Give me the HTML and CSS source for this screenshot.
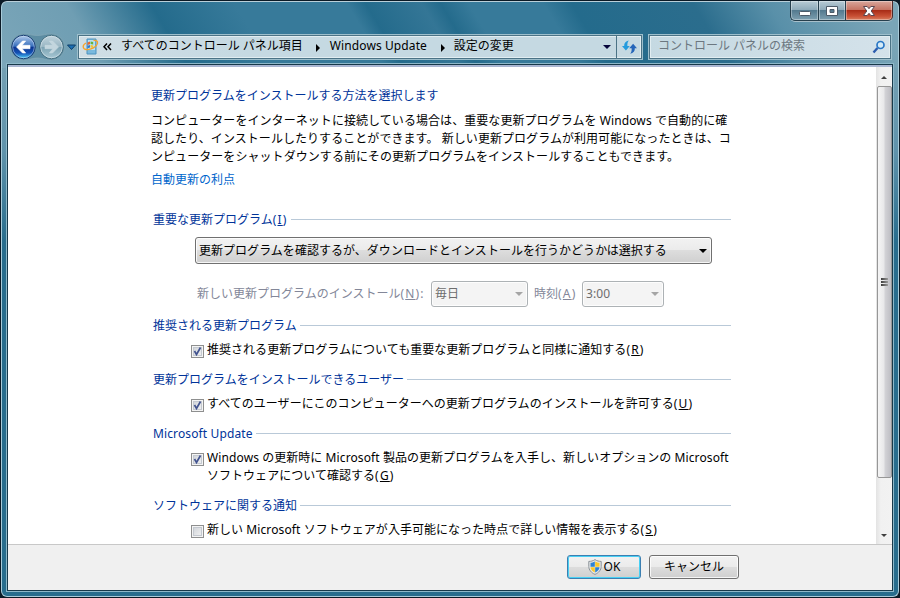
FILE: index.html
```html
<!DOCTYPE html>
<html lang="ja">
<head>
    <meta charset="UTF-8">
    <meta name="viewport" content="width=device-width, initial-scale=1.0">
    <title>設定の変更</title>
    <link rel="stylesheet" href="styles.css">
</head>
<body>
    <div class="window">
        <div class="caption">
            <span class="cap min"><svg width="14" height="8" viewBox="0 0 14 8"><rect x="1.500" y="2.500" width="11" height="4" rx="1" fill="#fff" stroke="#4c5b69"/></svg></span>
            <span class="cap max"><svg width="12" height="10" viewBox="0 0 12 10"><path d="M.5 .5h11v9H.5zM4 3.500h4v3H4z" fill="#fff" fill-rule="evenodd" stroke="#4c5b69"/></svg></span>
            <span class="cap close"><svg width="14" height="12" viewBox="0 0 14 12"><path d="M1.500 1.500h3.700L7 3.700l1.800-2.200h3.700L9.200 6l3.300 4.500H8.800L7 8.300l-1.800 2.200H1.500L4.800 6z" fill="#fff" stroke="#5a4650"/></svg></span>
        </div>
        <div class="navbar">
            <svg class="nav" width="72" height="28" viewBox="0 0 72 28">
                <defs>
                    <linearGradient id="back" x1="0" y1="0" x2="0" y2="1">
                        <stop offset="0" stop-color="#b3cdec"/>
                        <stop offset=".47" stop-color="#386fbd"/>
                        <stop offset=".5" stop-color="#0b3590"/>
                        <stop offset=".75" stop-color="#1450b4"/>
                        <stop offset="1" stop-color="#4fd2fa"/>
                    </linearGradient>
                    <linearGradient id="fwd" x1="0" y1="0" x2="0" y2="1">
                        <stop offset="0" stop-color="#c3d5de"/>
                        <stop offset=".5" stop-color="#98b6c3"/>
                        <stop offset=".52" stop-color="#7da3b3"/>
                        <stop offset="1" stop-color="#a9c9d5"/>
                    </linearGradient>
                </defs>
                <path d="M14.500 .8C20 .8 23 2.500 28.500 2.500S37 .8 42.500 .8a13.200 13.200 0 0 1 0 26.400C37 27.200 34 25 28.500 25S20 27.200 14.500 27.200a13.200 13.200 0 0 1 0-26.400z" fill="#4d7f96" fill-opacity=".6" stroke="#86a9b8" stroke-opacity=".7"/>
                <circle cx="14.500" cy="14" r="11.700" fill="url(#back)" stroke="#173a70"/>
                <circle cx="14.500" cy="14" r="10.800" fill="none" stroke="#d4e6f8" stroke-opacity=".6" stroke-width=".8"/>
                <path d="M7.500 14l6-6h3.200l-3.500 4.300H21v3.400h-7.800l3.500 4.300h-3.200z" fill="#fff" stroke="#fff" stroke-width=".6"/>
                <circle cx="42.500" cy="14" r="11.700" fill="url(#fwd)" stroke="#426b7c"/>
                <circle cx="42.500" cy="14" r="10.800" fill="none" stroke="#d9e8ee" stroke-opacity=".8" stroke-width=".8"/>
                <path d="M49.500 14l-6-6h-3.200l3.500 4.300H36v3.400h7.800l-3.500 4.300h3.200z" fill="#c3d6de" stroke="#c8dae1" stroke-width=".6"/>
                <path d="M58.500 12h8l-4 4.500z" fill="#1b6fb4" stroke="#0e3f68"/>
            </svg>
            <div class="address">
                <svg class="place" width="17" height="17" viewBox="0 0 17 17">
                    <path d="M5 1h9v15H5z" fill="#79b9de" stroke="#4c93c0"/>
                    <path d="M6 2h7v10H6z" fill="#b8e0f4"/>
                    <path d="M5.500 4.500l2.500-1v2.700l-2.500 .8z" fill="#e8662e"/>
                    <path d="M8.600 3.500l2.600 .6v2.400l-2.600-.4z" fill="#66b53b"/>
                    <path d="M5.500 7.700l2.500-.7v2.500l-2.500 .8z" fill="#2e78cf"/>
                    <path d="M8.600 7l2.600 .5v2.300l-2.600-.3z" fill="#f7c52c"/>
                    <path d="M4 5C0 7 .5 11 4 11.500c5 .5 11-3 11.500-6C16 3 14 2 11.500 2.500" fill="none" stroke="#f5a32b" stroke-width="1.300"/>
                </svg>
                <svg class="chevrons" width="9" height="8" viewBox="0 0 9 8"><path d="M4 .5L1 3.800l3 3.200M8 .5L5 3.800 8 7" fill="none" stroke="#000" stroke-width="1.500"/></svg>
                <span class="crumb">すべてのコントロール パネル項目</span>
                <i class="sep"></i>
                <span class="crumb en-wide">Windows Update</span>
                <i class="sep"></i>
                <span class="crumb">設定の変更</span>
                <i class="arrow"></i>
                <span class="refresh">
                    <svg width="15" height="14" viewBox="0 0 15 14">
                        <path d="M6.800 .5C3.500 1 2 3.200 2.200 6H0L3.900 10.400 7.800 6H5.400C5.200 3.800 5.500 2 6.800 .5z" fill="#249bdd"/>
                        <path d="M8.200 13.700c3.300-.5 4.800-2.700 4.600-5.500H15L11.100 3.800 7.200 8.200h2.400c.2 2.200-.1 4-1.400 5.500z" fill="#2565b9"/>
                    </svg>
                </span>
            </div>
            <div class="search">
                <span>コントロール パネルの検索</span>
                <svg width="14" height="14" viewBox="0 0 14 14"><path d="M1.500 12.500l4-4.500" stroke="#2c5cae" stroke-width="2.400"/><circle cx="8.500" cy="5" r="3.500" fill="#d5ebf8" stroke="#2a77c5" stroke-width="1.700"/></svg>
            </div>
        </div>
        <div class="client">
            <div class="page">
                <div class="content">
                    <h1>更新プログラムをインストールする方法を選択します</h1>
                    <p>コンピューターをインターネットに接続している場合は、重要な更新プログラムを <span class="en">Windows</span> で自動的に確<br>認したり、インストールしたりすることができます。 新しい更新プログラムが利用可能になったときは、コ<br>ンピューターをシャットダウンする前にその更新プログラムをインストールすることもできます。</p>
                    <a class="link">自動更新の利点</a>

                    <h2 class="first">重要な更新プログラム<span class="key">(<u>I</u>)</span></h2>
                    <div class="combo main"><span>更新プログラムを確認するが、ダウンロードとインストールを行うかどうかは選択する</span><i class="arrow"></i></div>
                    <div class="schedule">
                        <span class="day-label">新しい更新プログラムのインストール<span class="key">(<u>N</u>):</span></span>
                        <div class="combo off day"><span>毎日</span><i class="arrow"></i></div>
                        <span class="time-label">時刻<span class="key">(<u>A</u>)</span></span>
                        <div class="combo off time"><span class="en">3:00</span><i class="arrow"></i></div>
                    </div>

                    <h2>推奨される更新プログラム</h2>
                    <div class="option">
                        <span class="check"><svg width="9" height="9" viewBox="0 0 9 9"><path d="M1.500 4l2 3.500L7.500 .5" fill="none" stroke="#42538f" stroke-width="1.700"/></svg></span>
                        <span class="text">推奨される更新プログラムについても重要な更新プログラムと同様に通知する<span class="key">(<u>R</u>)</span></span>
                    </div>

                    <h2>更新プログラムをインストールできるユーザー</h2>
                    <div class="option">
                        <span class="check"><svg width="9" height="9" viewBox="0 0 9 9"><path d="M1.500 4l2 3.500L7.500 .5" fill="none" stroke="#42538f" stroke-width="1.700"/></svg></span>
                        <span class="text">すべてのユーザーにこのコンピューターへの更新プログラムのインストールを許可する<span class="key">(<u>U</u>)</span></span>
                    </div>

                    <h2><span class="en">Microsoft Update</span></h2>
                    <div class="option">
                        <span class="check"><svg width="9" height="9" viewBox="0 0 9 9"><path d="M1.500 4l2 3.500L7.500 .5" fill="none" stroke="#42538f" stroke-width="1.700"/></svg></span>
                        <span class="text"><span class="en">Windows</span> の更新時に <span class="en">Microsoft</span> 製品の更新プログラムを入手し、新しいオプションの <span class="en">Microsoft</span><br>ソフトウェアについて確認する<span class="key">(<u>G</u>)</span></span>
                    </div>

                    <h2>ソフトウェアに関する通知</h2>
                    <div class="option">
                        <span class="check"></span>
                        <span class="text">新しい <span class="en">Microsoft</span> ソフトウェアが入手可能になった時点で詳しい情報を表示する<span class="key">(<u>S</u>)</span></span>
                    </div>
                </div>
                <div class="scrollbar">
                    <i class="up"></i>
                    <div class="thumb"><i></i><i></i><i></i></div>
                    <i class="down"></i>
                </div>
            </div>
            <div class="footer">
                <div class="button default">
                    <svg width="14" height="16" viewBox="0 0 14 16">
                        <path d="M7 .6C5 2 3 2.400 .8 2.400v5C.8 11 3.500 14 7 15.400c3.500-1.400 6.200-4.400 6.200-8v-5C11 2.400 9 2 7 .6z" fill="#e6e8ea" stroke="#8b9298"/>
                        <path d="M6.800 2.500C5.300 3.400 4 3.700 2.500 3.800v4h4.300z" fill="#2c82d4"/>
                        <path d="M7.200 2.500c1.500.9 2.800 1.200 4.300 1.300v4H7.200z" fill="#fbc92b"/>
                        <path d="M2.500 8.200h4.300v5.200C4.300 12.300 2.700 10.500 2.500 8.200z" fill="#fbc92b"/>
                        <path d="M11.500 8.200H7.200v5.200c2.500-1.100 4.100-2.900 4.300-5.200z" fill="#2c82d4"/>
                    </svg>
                    <span>OK</span>
                </div>
                <div class="button">キャンセル</div>
            </div>
        </div>
    </div>
</body>
</html>
```

FILE: styles.css
```css
* {
    box-sizing: border-box;
}
body {
    margin: 0;
    padding-top: 1px;
    background: #0b1a26;
    font-family: "Noto Sans", "Noto Sans CJK JP", sans-serif;
    font-size: 12px;
    line-height: 18px;
    color: #000;
    overflow: hidden;
    white-space: nowrap;
}
h1, h2, p {
    margin: 0;
    font-size: 12px;
    font-weight: normal;
}
svg {
    display: block;
    flex: none;
}
u {
    text-underline-offset: 1px;
}
.en {
    letter-spacing: 0.12px;
}
.key {
    letter-spacing: 1.2px;
}
.window {
    width: 898px;
    height: 596px;
    margin-left: 1px;
    padding: 0 5px 4px 4px;
    border: 1px solid #a9cbd9;
    border-top-color: #b9cfd9;
    border-radius: 6px;
    background:
        linear-gradient(59deg, #7ba6b9 0, #6f9eb3 11%, #246b8c 20%, #377a9a 29%, #377a9a 41%, #246b8c 43%, #347696 49%, #246b8c 51%, #377a9a 54%, #377a9a 62%, #246b8c 65%, #2b6d8d 78%, #5990a9 86%, #7aa5b7 97%) 0 0 / 100% 66px no-repeat,
        linear-gradient(#74a0b3 66px, #5f93ab 150px, #286d8d 240px, #286d8d);
}

/* caption buttons */
.caption {
    display: flex;
    justify-content: flex-end;
    height: 30px;
    margin-top: -1px;
    padding-right: 7px;
    margin-right: -7px;
}
.cap {
    display: flex;
    align-items: center;
    justify-content: center;
    width: 28px;
    height: 20px;
    border: 1px solid #263f4d;
    border-top: 0;
    border-right: 0;
    background: linear-gradient(#b7cbd5, #8fabba 45%, #547a8f 50%, #7d9fb0);
    box-shadow: inset 0 0 0 1px rgba(255, 255, 255, 0.35), 0 1px 0 #a8c0cb;
}
.min {
    border-bottom-left-radius: 5px;
}
.min svg {
    margin-top: 5px;
}
.max {
    width: 27px;
}
.close {
    width: 48px;
    border-right: 1px solid #4d2a2a;
    border-bottom-right-radius: 5px;
    background: linear-gradient(#d9a79c, #c67565 45%, #a92d18 50%, #c95136 80%, #d77f61);
}

/* navigation row */
.navbar {
    display: flex;
    align-items: center;
    height: 32px;
    padding: 0 1px 0 3px;
}
.nav {
    margin-right: -4px;
}
.address, .search {
    display: flex;
    align-items: center;
    height: 26px;
    margin-top: -1px;
    border: 1px solid #9dbfcc;
    box-shadow: inset 0 0 0 1px #4b7386, inset 0 0 0 2px #e1edf1;
    background: linear-gradient(90deg, #d0dee5, #c5d9e2 30%, #c5d9e2);
}
.address {
    flex: none;
    width: 566px;
    padding: 0 0 0 4px;
    margin-right: 5px;
}
.place {
    margin-right: 4px;
}
.chevrons {
    margin-right: 9px;
}
.crumb {
    margin-top: -2px;
}
.sep {
    margin: 2px 9px 0 13px;
    border: 4px solid transparent;
    border-left-color: #000;
    border-right-width: 0;
}
.en-wide {
    width: 98px;
    margin-left: 1px;
    letter-spacing: 0.1px;
}
.arrow {
    flex: none;
    margin-left: auto;
    border: 4px solid transparent;
    border-top-color: currentColor;
    border-bottom-width: 0;
}
.address .arrow {
    color: #06063c;
    margin-right: 5px;
    margin-top: 1px;
}
.refresh {
    display: flex;
    align-items: center;
    justify-content: center;
    width: 26px;
    height: 22px;
    border-left: 1px solid #4b7386;
}
.search {
    flex: 1;
    justify-content: space-between;
    padding: 0 5px 0 9px;
    background: linear-gradient(90deg, #c5d9e2, #d4e2ea);
    color: #6c7780;
}
.search span {
    margin-top: -1px;
}

/* client area */
.client {
    display: flex;
    flex-direction: column;
    width: 888px;
    height: 529px;
    border: 1px solid #8db8c9;
    box-shadow: inset 0 0 0 1px #17394a;
    padding: 2px;
    background: #fff;
}
.page {
    display: flex;
    flex: none;
    height: 480px;
    margin: -1px -1px 0;
    border-top: 2px solid #a9b6d2;
    border-bottom: 1px solid #c8c8c8;
}
.content {
    flex: 1;
    height: 477px;
    padding: 20px 0 0 143px;
    overflow: hidden;
}
h1, h2 {
    color: #003399;
}
p {
    margin-top: 7px;
    letter-spacing: 0.06px;
}
.link {
    display: block;
    margin-top: 5px;
    color: #0066cc;
}
h2 {
    display: flex;
    align-items: center;
    width: 578px;
    margin: 11px 0 7px 2px;
}
h2::after {
    content: "";
    flex: 1;
    height: 1px;
    margin: 0 0 1px 3px;
    background: #b9c9d8;
}
h2.first {
    margin-top: 22px;
}
.combo {
    display: flex;
    align-items: center;
    height: 26px;
    padding: 0 4px 0 3px;
    border: 1px solid #707070;
    border-radius: 3px;
    background: linear-gradient(#f2f2f2, #ebebeb 48%, #dddddd 50%, #cfcfcf);
    box-shadow: inset 0 0 0 1px rgba(255, 255, 255, 0.8);
}
.schedule > span {
    margin-top: -1px;
}
.main {
    width: 517px;
    height: 27px;
    margin: 8px 0 0 44px;
    letter-spacing: 0.03px;
}
.schedule {
    display: flex;
    align-items: center;
    margin: 17px 0 0 46px;
    color: #838799;
}
.day-label {
    width: 234px;
}
.time-label {
    width: 48px;
    margin-left: 6px;
}
.off {
    border-color: #adb2b5;
    background: #f4f4f4;
    color: #6d6d6d;
}
.off .arrow {
    color: #a5a5a5;
}
.day {
    width: 97px;
}
.time {
    width: 82px;
}
.schedule + h2 {
    margin-top: 10px;
}
.option {
    display: flex;
    margin-left: 40px;
}
.text {
    margin: -1px 0 1px;
    letter-spacing: 0.03px;
}
.check {
    flex: none;
    display: flex;
    align-items: center;
    justify-content: center;
    width: 13px;
    height: 13px;
    margin: 3px 3px 0 0;
    border: 1px solid #8e8f8f;
    background: linear-gradient(135deg, #cbcfd5, #f6f6f6);
    box-shadow: inset 0 0 0 1px #f4f4f4, inset 0 0 0 2px #c4c9d0;
}

/* scrollbar */
.scrollbar {
    display: flex;
    flex-direction: column;
    align-items: center;
    width: 16px;
    background: linear-gradient(90deg, #e3e3e3, #f1f1f1 30%, #f2f2f2);
}
.up, .down {
    border: 3.5px solid transparent;
}
.up {
    border-top: 0;
    border-bottom-color: #404040;
    margin: 9px 0 7px;
}
.down {
    border-bottom: 0;
    border-top-color: #404040;
    margin-top: auto;
    margin-bottom: 7px;
}
.thumb {
    display: flex;
    flex-direction: column;
    align-items: center;
    justify-content: center;
    gap: 1px;
    width: 15px;
    height: 392px;
    border: 1px solid #979797;
    border-radius: 2px;
    background: linear-gradient(90deg, #f5f5f5, #e8e8ea 45%, #d2d2d6 55%, #bdbdc3);
}
.thumb i {
    width: 7px;
    height: 2px;
    background: linear-gradient(90deg, #3c3c3c, #9c9c9c);
}

/* footer */
.footer {
    display: flex;
    justify-content: flex-end;
    flex: 1;
    gap: 8px;
    padding: 10px 153px 0 0;
    margin: 0 -1px -1px;
    background: #f0f0f0;
}
.button {
    display: flex;
    align-items: center;
    justify-content: center;
    gap: 2px;
    width: 90px;
    height: 24px;
    border: 1px solid #707070;
    border-radius: 3px;
    background: linear-gradient(#f2f2f2, #ebebeb 48%, #dddddd 50%, #cfcfcf);
    box-shadow: inset 0 0 0 1px rgba(255, 255, 255, 0.8);
}
.default {
    width: 74px;
    border-color: #3c7fb1;
    box-shadow: inset 0 0 0 1px #48d0f4;
}
```
